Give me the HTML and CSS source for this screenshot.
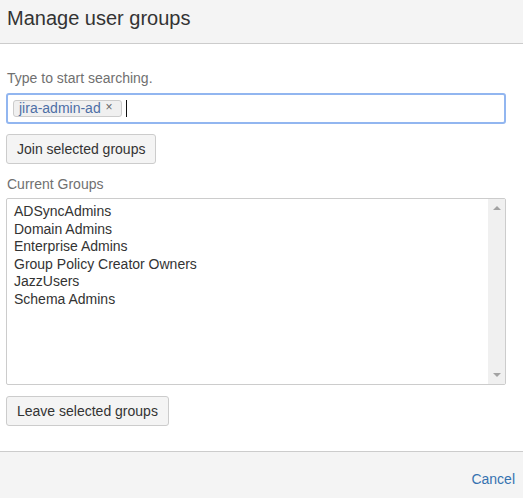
FILE: index.html
```html
<!DOCTYPE html>
<html>
<head>
<meta charset="utf-8">
<link rel="stylesheet" href="styles.css">
</head>
<body>
<div class="dialog">
  <header class="dialog-header">
    <h2 class="dialog-title">Manage user groups</h2>
  </header>
  <main class="dialog-body">
    <div class="field-label">Type to start searching.</div>
    <div class="picker">
      <span class="tag">jira-admin-ad <span class="tag-x">×</span></span>
      <span class="caret"></span>
    </div>
    <button class="btn btn-join">Join selected groups</button>
    <div class="field-label field-label-groups">Current Groups</div>
    <div class="listbox">
      <ul class="list">
        <li>ADSyncAdmins</li>
        <li>Domain Admins</li>
        <li>Enterprise Admins</li>
        <li>Group Policy Creator Owners</li>
        <li>JazzUsers</li>
        <li>Schema Admins</li>
      </ul>
      <div class="scrollbar">
        <span class="arrow arrow-up"></span>
        <span class="arrow arrow-down"></span>
      </div>
    </div>
    <button class="btn btn-leave">Leave selected groups</button>
  </main>
  <footer class="dialog-footer">
    <a class="cancel" href="#">Cancel</a>
  </footer>
</div>
</body>
</html>
```
FILE: styles.css
```css
html, body {
  margin: 0;
  padding: 0;
  background: #ffffff;
}
body {
  font-family: "Liberation Sans", Arial, sans-serif;
  font-size: 14px;
  color: #333333;
}
.dialog {
  width: 523px;
  height: 498px;
  display: flex;
  flex-direction: column;
}
.dialog-header {
  height: 44px;
  box-sizing: border-box;
  background: #f4f4f4;
  border-bottom: 1px solid #cccccc;
  padding: 7px 7px 0;
}
.dialog-title {
  margin: 0;
  font-size: 20px;
  line-height: 23px;
  font-weight: normal;
  color: #333333;
}
.dialog-body {
  padding: 25px 17px 25px 6px;
  display: flex;
  flex-direction: column;
  align-items: flex-start;
}
.field-label {
  line-height: 19px;
  color: #707070;
  margin-left: 1px;
  margin-bottom: 5px;
}
.field-label-groups {
  margin-top: 10px;
  line-height: 20px;
  margin-bottom: 4px;
}
.picker {
  width: 500px;
  height: 31px;
  box-sizing: border-box;
  border: 2px solid #92b6f0;
  border-radius: 3px;
  padding: 5px 5px;
  display: flex;
  align-items: flex-start;
  gap: 4px;
}
.tag {
  height: 17px;
  box-sizing: border-box;
  border: 1px solid #cccccc;
  border-radius: 3px;
  background: #f0f0f0;
  color: #4d6fa6;
  padding: 0 8px 0 5px;
  line-height: 15px;
  font-size: 14px;
  white-space: nowrap;
}
.tag-x {
  color: #666666;
  font-size: 12px;
  margin-left: 1px;
  position: relative;
  top: -2px;
}
.caret {
  width: 1px;
  height: 17px;
  background: #111111;
}
.btn {
  height: 30px;
  box-sizing: border-box;
  border: 1px solid #cccccc;
  border-radius: 3px;
  background: #f4f4f4;
  color: #333333;
  font-family: "Liberation Sans", Arial, sans-serif;
  font-size: 14px;
  padding: 0 10px;
  line-height: 28px;
  margin: 10px 0 0;
  white-space: nowrap;
}
.btn-leave {
  margin-top: 11px;
}
.listbox {
  width: 500px;
  height: 187px;
  box-sizing: border-box;
  border: 1px solid #cccccc;
  border-radius: 2px;
  display: flex;
}
.list {
  flex: 1;
  list-style: none;
  margin: 0;
  padding: 4px 7px;
  line-height: 17.6px;
  color: #333333;
}
.scrollbar {
  width: 17px;
  background: #f0f0f0;
  display: flex;
  flex-direction: column;
  justify-content: space-between;
  align-items: center;
  padding: 7px 0 7px;
}
.arrow {
  width: 0;
  height: 0;
  border-left: 4px solid transparent;
  border-right: 4px solid transparent;
}
.arrow-up {
  border-bottom: 4px solid #a3a3a3;
}
.arrow-down {
  border-top: 4px solid #a3a3a3;
}
.dialog-footer {
  flex: 1;
  background: #f4f4f4;
  border-top: 1px solid #cccccc;
  display: flex;
  justify-content: flex-end;
  align-items: flex-start;
  padding: 17px 8px 0;
}
.cancel {
  color: #3572b0;
  text-decoration: none;
  line-height: 20px;
}
```
